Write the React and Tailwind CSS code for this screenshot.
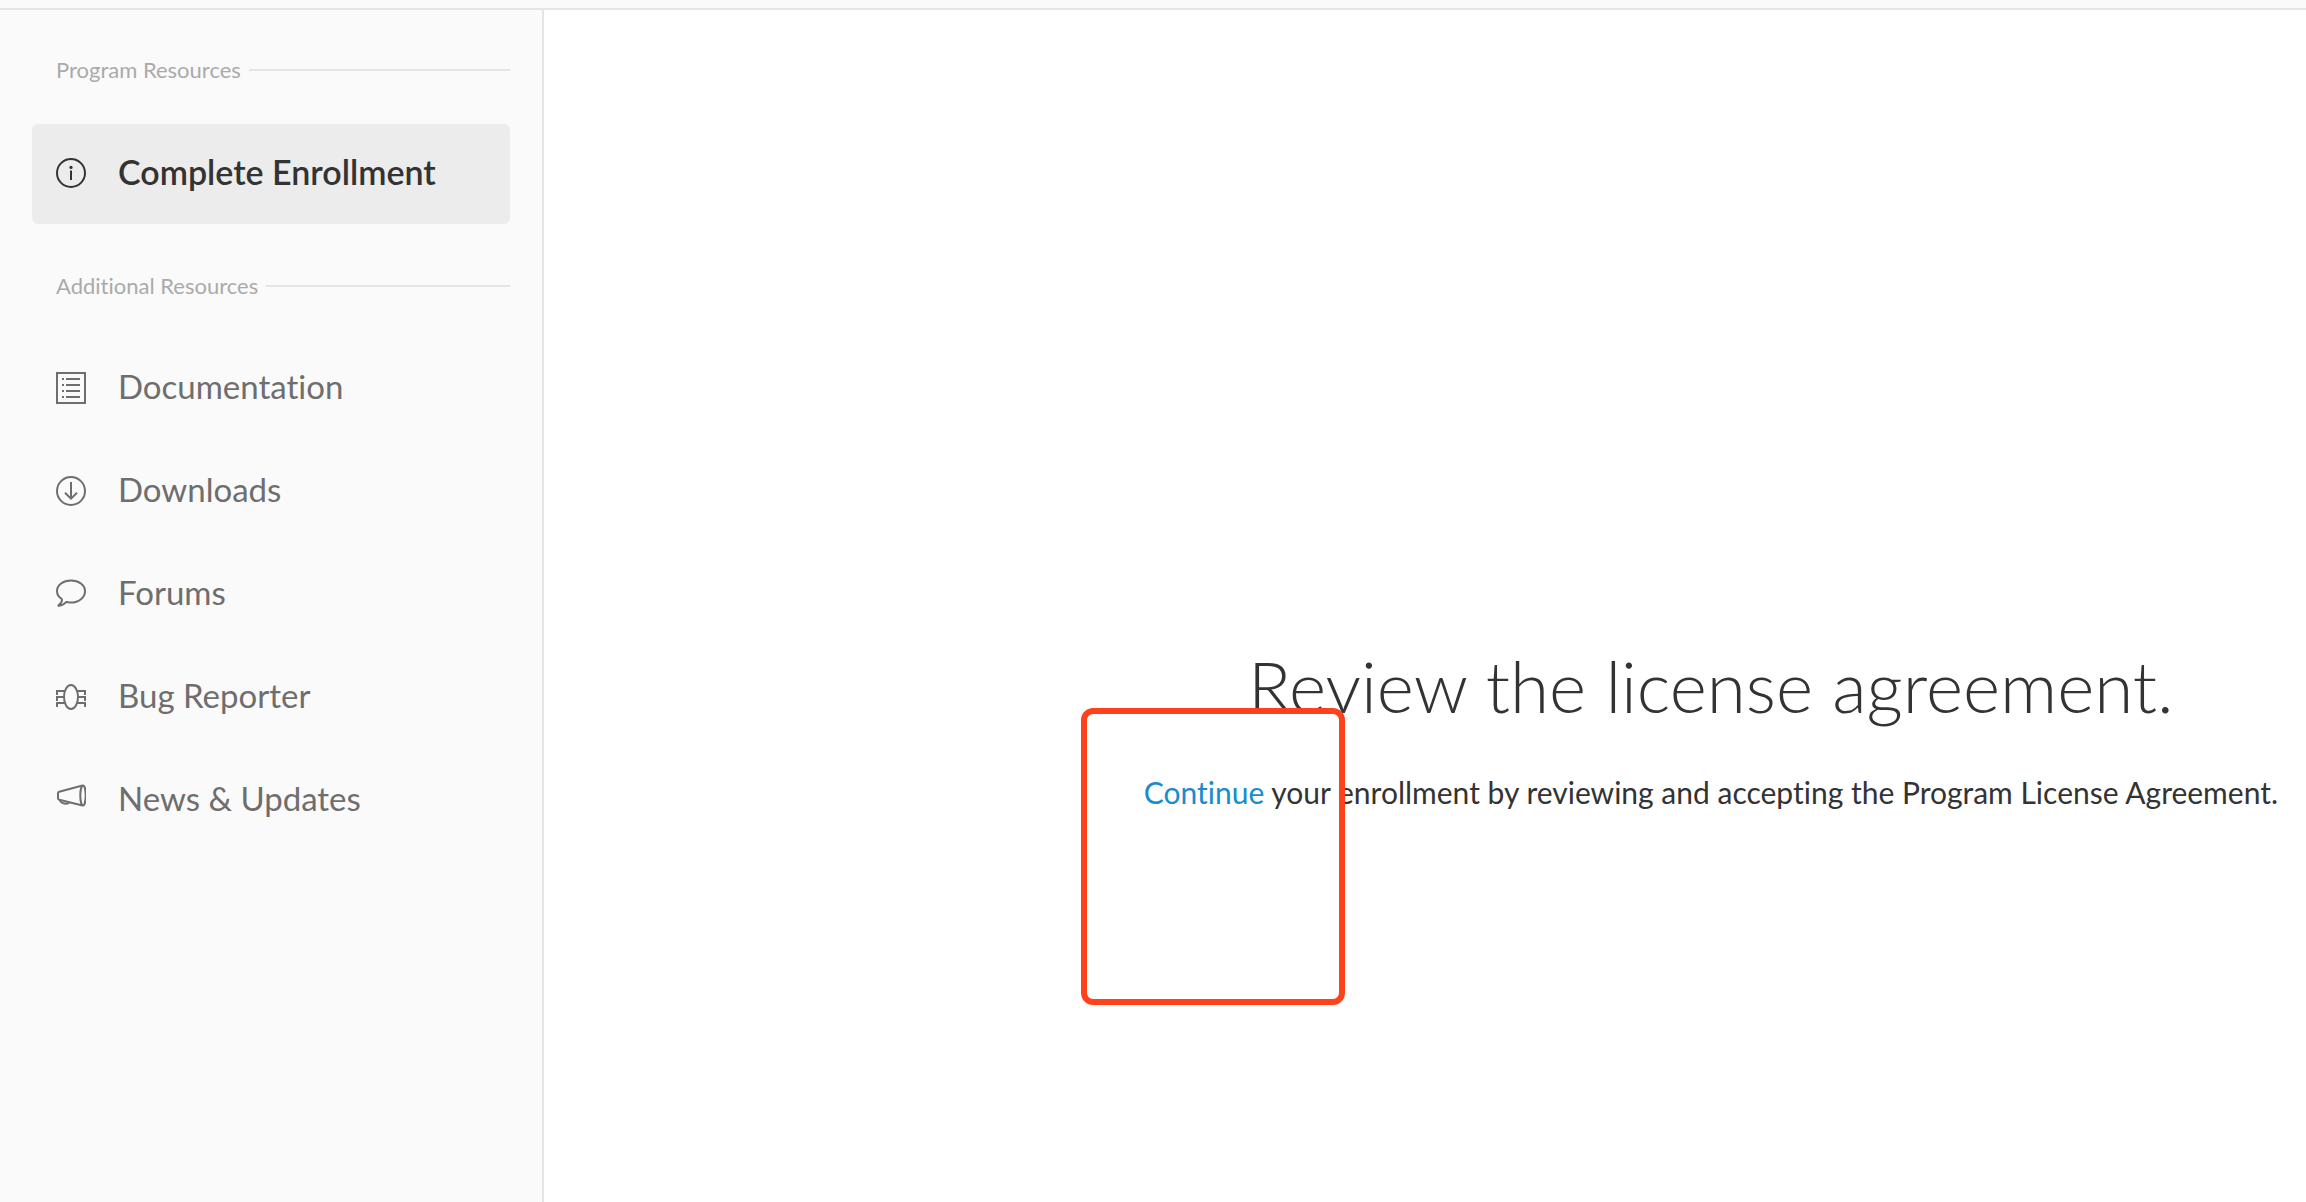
import React from "react";

const InfoIcon = () => (
    <>
        <circle cx="15" cy="15" r="14" />
        <circle cx="15" cy="9.4" r="1.6" fill="currentColor" stroke="none" />
        <path d="M15 12.5V22" />
    </>
);

const DocumentIcon = () => (
    <>
        <rect x="1" y="1" width="28" height="30" />
        <path d="M10 7h14M10 13h14M10 19h14M10 25h14" />
        <path d="M6 7h2M6 13h2M6 19h2M6 25h2" />
    </>
);

const DownloadIcon = () => (
    <>
        <circle cx="15" cy="16" r="14" />
        <path d="M15 7v16.5M9 17.7l6 6 6-6" />
    </>
);

const ForumIcon = () => (
    <path d="M5.8 21C2.6 19 1 16.2 1 13.2 1 7 7.2 2.5 15 2.5S29 7 29 13.2 22.8 24.6 15 24.6c-1.7 0-3.2-.4-4.6-.7-2.2 2-4.9 3.9-8 3.8C1.5 27.4 7 25.2 5.8 21Z" />
);

const BugIcon = () => (
    <>
        <ellipse cx="15" cy="16" rx="7" ry="12" />
        <path d="M9 10H1v4M8 16H1v4M9 22H1v4M21 10h8v4M22 16h7v4M21 22h8v4" />
    </>
);

const MegaphoneIcon = () => (
    <>
        <ellipse cx="27" cy="11.5" rx="2.7" ry="10" />
        <path d="M26.5 1.5 3.2 7.8C2.3 8 2 8.5 2 9.3v4.9c0 .8.4 1.3 1.2 1.5l23.3 5.8" />
        <path d="M3.8 16c.6 2.5 4 3.8 6.4 3.8 1.4 0 2.4-.4 3.2-1.4" />
    </>
);

const additionalLinks = [
    { label: "Documentation", icon: DocumentIcon },
    { label: "Downloads", icon: DownloadIcon },
    { label: "Forums", icon: ForumIcon },
    { label: "Bug Reporter", icon: BugIcon },
    { label: "News & Updates", icon: MegaphoneIcon },
];

function NavIcon({ icon: Icon }) {
    return (
        <svg
            viewBox="0 0 30 32"
            fill="none"
            stroke="currentColor"
            strokeWidth="2"
            className="w-[30px] h-8 shrink-0"
            aria-hidden="true"
        >
            <Icon />
        </svg>
    );
}

function SectionTitle({ children }) {
    return (
        <div className="flex items-center gap-2 pl-6">
            <h2 className="text-[22px] leading-8 text-[#aaaaaa]">{children}</h2>
            <div className="flex-1 h-[2px] bg-[#e5e5e5]"></div>
        </div>
    );
}

export default function App() {
    return (
        <div className="min-h-screen flex flex-col bg-white font-['Lato',sans-serif] [font-variant-ligatures:none] text-[#333333]">
            <header className="h-[10px] bg-[#fafafa] border-b-2 border-[#e5e5e5]"></header>

            <div className="flex flex-1">
                <aside className="w-[544px] shrink-0 bg-[#fafafa] border-r-2 border-[#e5e5e5] px-8 pt-11">
                    <SectionTitle>Program Resources</SectionTitle>
                    <a
                        href="#enrollment"
                        className="flex items-center gap-8 mt-[38px] h-[100px] pl-6 rounded-md bg-[#ececec] text-[34px] leading-10 font-semibold"
                    >
                        <NavIcon icon={InfoIcon} />
                        <span className="pb-1">Complete Enrollment</span>
                    </a>

                    <div className="mt-[46px]">
                        <SectionTitle>Additional Resources</SectionTitle>
                    </div>
                    <nav className="flex flex-col gap-[31px] mt-[50px]">
                        {additionalLinks.map((link) => (
                            <a
                                key={link.label}
                                href="#resources"
                                className="flex items-center gap-8 h-[72px] pl-6 text-[33px] leading-10 text-[#6e6e6e]"
                            >
                                <NavIcon icon={link.icon} />
                                <span className="pb-1">{link.label}</span>
                            </a>
                        ))}
                    </nav>
                </aside>

                <main className="flex-1 flex flex-col items-end pt-[636px] pr-7">
                    <div className="relative text-center">
                        <h1 className="text-[71px] leading-[80px] font-light">Review the license agreement.</h1>
                        <p className="mt-[46px] text-[30px] leading-10">
                            <a href="#continue" className="text-[#1a8bcb]">Continue</a> your enrollment by reviewing and accepting the Program License Agreement.
                        </p>
                        {/* highlight around the continue link */}
                        <div className="absolute top-[62px] -left-[63px] w-[264px] h-[297px] border-6 border-[#ff421c] rounded-xl pointer-events-none"></div>
                    </div>
                </main>
            </div>
        </div>
    );
}
